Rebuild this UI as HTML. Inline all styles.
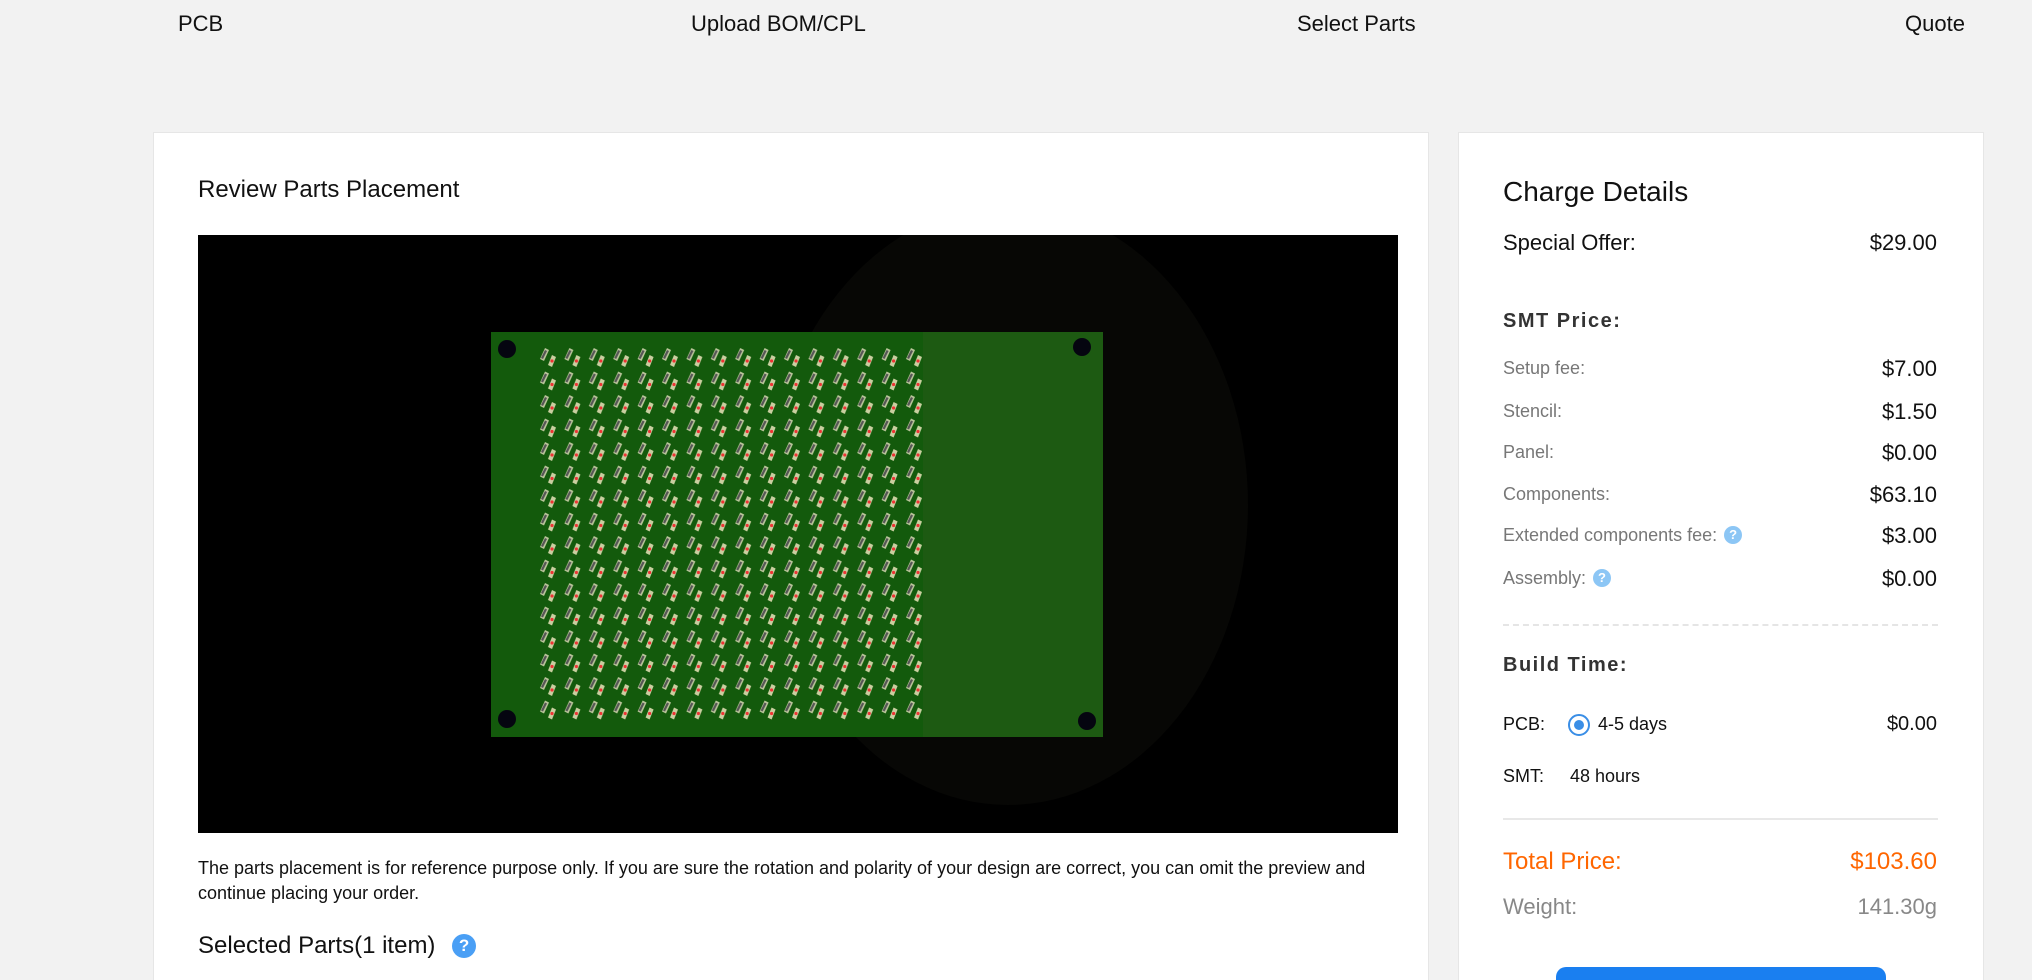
<!DOCTYPE html>
<html><head><meta charset="utf-8"><style>
*{margin:0;padding:0;box-sizing:border-box}
html,body{width:2032px;height:980px;overflow:hidden}
body{background:#f2f2f2;font-family:"Liberation Sans",Arial,sans-serif;color:#111;position:relative}
.a{position:absolute;white-space:nowrap}
.nav{top:11px;font-size:22px;color:#111}
.card{position:absolute;background:#fff;border:1px solid #e6e6e6;border-bottom:none}
.lbl{font-size:18px;color:#777;left:1503px}
.val{font-size:22px;color:#111;right:95px}
.q{display:inline-block;width:18px;height:18px;border-radius:50%;background:#8cc6f5;color:#fff;font-size:13px;font-weight:bold;text-align:center;line-height:18px;vertical-align:2px;margin-left:7px}
</style></head><body>
<div class="a nav" style="left:178px">PCB</div>
<div class="a nav" style="left:691px">Upload BOM/CPL</div>
<div class="a nav" style="left:1297px">Select Parts</div>
<div class="a nav" style="left:1905px">Quote</div>

<div class="card" style="left:153px;top:132px;width:1276px;height:848px"></div>
<div class="card" style="left:1458px;top:132px;width:526px;height:848px"></div>

<div class="a" style="left:198px;top:176px;font-size:24px">Review Parts Placement</div>
<svg class="a" style="left:198px;top:235px" width="1200" height="598" viewBox="0 0 1200 598">
<defs><pattern id="p" x="336" y="110" width="24.4" height="23.5" patternUnits="userSpaceOnUse">
<path d="M6 14 L11 3 L15 5 L10 16Z" fill="#b9c49a"/><path d="M7 13 L11 5 L13 6 L9 14Z" fill="#555"/>
<path d="M14 20 L18 10 L22 12 L18 22Z" fill="#c9cfa0"/><circle cx="18" cy="16" r="1.6" fill="#e33"/>
</pattern></defs>
<rect width="1200" height="598" fill="#000"/>
<ellipse cx="810" cy="270" rx="240" ry="300" fill="#070705"/>
<rect x="293" y="97" width="612" height="405" fill="#135a0c"/>
<rect x="725" y="97" width="180" height="405" fill="#1d5a12"/>
<rect x="336" y="110" width="391" height="376" fill="url(#p)"/>
<circle cx="309" cy="114" r="9" fill="#050510"/><circle cx="884" cy="112" r="9" fill="#050510"/>
<circle cx="309" cy="484" r="9" fill="#050510"/><circle cx="889" cy="486" r="9" fill="#050510"/>
</svg>
<div class="a" style="left:198px;top:856px;font-size:18px;line-height:25px;white-space:normal;width:1200px">The parts placement is for reference purpose only. If you are sure the rotation and polarity of your design are correct, you can omit the preview and continue placing your order.</div>
<div class="a" style="left:198px;top:932px;font-size:24px">Selected Parts(1 item) <span style="display:inline-block;width:24px;height:24px;border-radius:50%;background:#4a9ff5;color:#fff;font-size:17px;font-weight:bold;text-align:center;line-height:24px;margin-left:10px;vertical-align:2px">?</span></div>

<div class="a" style="left:1503px;top:176px;font-size:28px">Charge Details</div>
<div class="a" style="left:1503px;top:230px;font-size:22px">Special Offer:</div>
<div class="a val" style="top:230px">$29.00</div>
<div class="a" style="left:1503px;top:310px;font-size:20px;font-weight:bold;letter-spacing:1.5px;color:#333">SMT Price:</div>
<div class="a lbl" style="top:358px">Setup fee:</div><div class="a val" style="top:356px">$7.00</div>
<div class="a lbl" style="top:401px">Stencil:</div><div class="a val" style="top:399px">$1.50</div>
<div class="a lbl" style="top:442px">Panel:</div><div class="a val" style="top:440px">$0.00</div>
<div class="a lbl" style="top:484px">Components:</div><div class="a val" style="top:482px">$63.10</div>
<div class="a lbl" style="top:525px">Extended components fee:<span class="q">?</span></div><div class="a val" style="top:523px">$3.00</div>
<div class="a lbl" style="top:568px">Assembly:<span class="q">?</span></div><div class="a val" style="top:566px">$0.00</div>
<div class="a" style="left:1503px;top:624px;width:435px;border-top:2px dashed #e5e5e5"></div>
<div class="a" style="left:1503px;top:654px;font-size:20px;font-weight:bold;letter-spacing:1.5px;color:#333">Build Time:</div>
<div class="a" style="left:1503px;top:714px;font-size:18px">PCB:</div>
<div class="a" style="left:1568px;top:714px;width:22px;height:22px;border:2px solid #3a8ee6;border-radius:50%"></div>
<div class="a" style="left:1574px;top:720px;width:10px;height:10px;background:#3a8ee6;border-radius:50%"></div>
<div class="a" style="left:1598px;top:714px;font-size:18px">4-5 days</div>
<div class="a" style="right:95px;top:713px;font-size:20px">$0.00</div>
<div class="a" style="left:1503px;top:766px;font-size:18px">SMT:</div>
<div class="a" style="left:1570px;top:766px;font-size:18px">48 hours</div>
<div class="a" style="left:1503px;top:818px;width:435px;border-top:2px solid #e8e8e8"></div>
<div class="a" style="left:1503px;top:848px;font-size:24px;color:#f60">Total Price:</div>
<div class="a" style="right:95px;top:848px;font-size:24px;color:#f60">$103.60</div>
<div class="a" style="left:1503px;top:894px;font-size:22px;color:#888">Weight:</div>
<div class="a" style="right:95px;top:894px;font-size:22px;color:#888">141.30g</div>
<div class="a" style="left:1556px;top:967px;width:330px;height:13px;background:#1a7ff0;border-radius:10px 10px 0 0"></div>
</body></html>
